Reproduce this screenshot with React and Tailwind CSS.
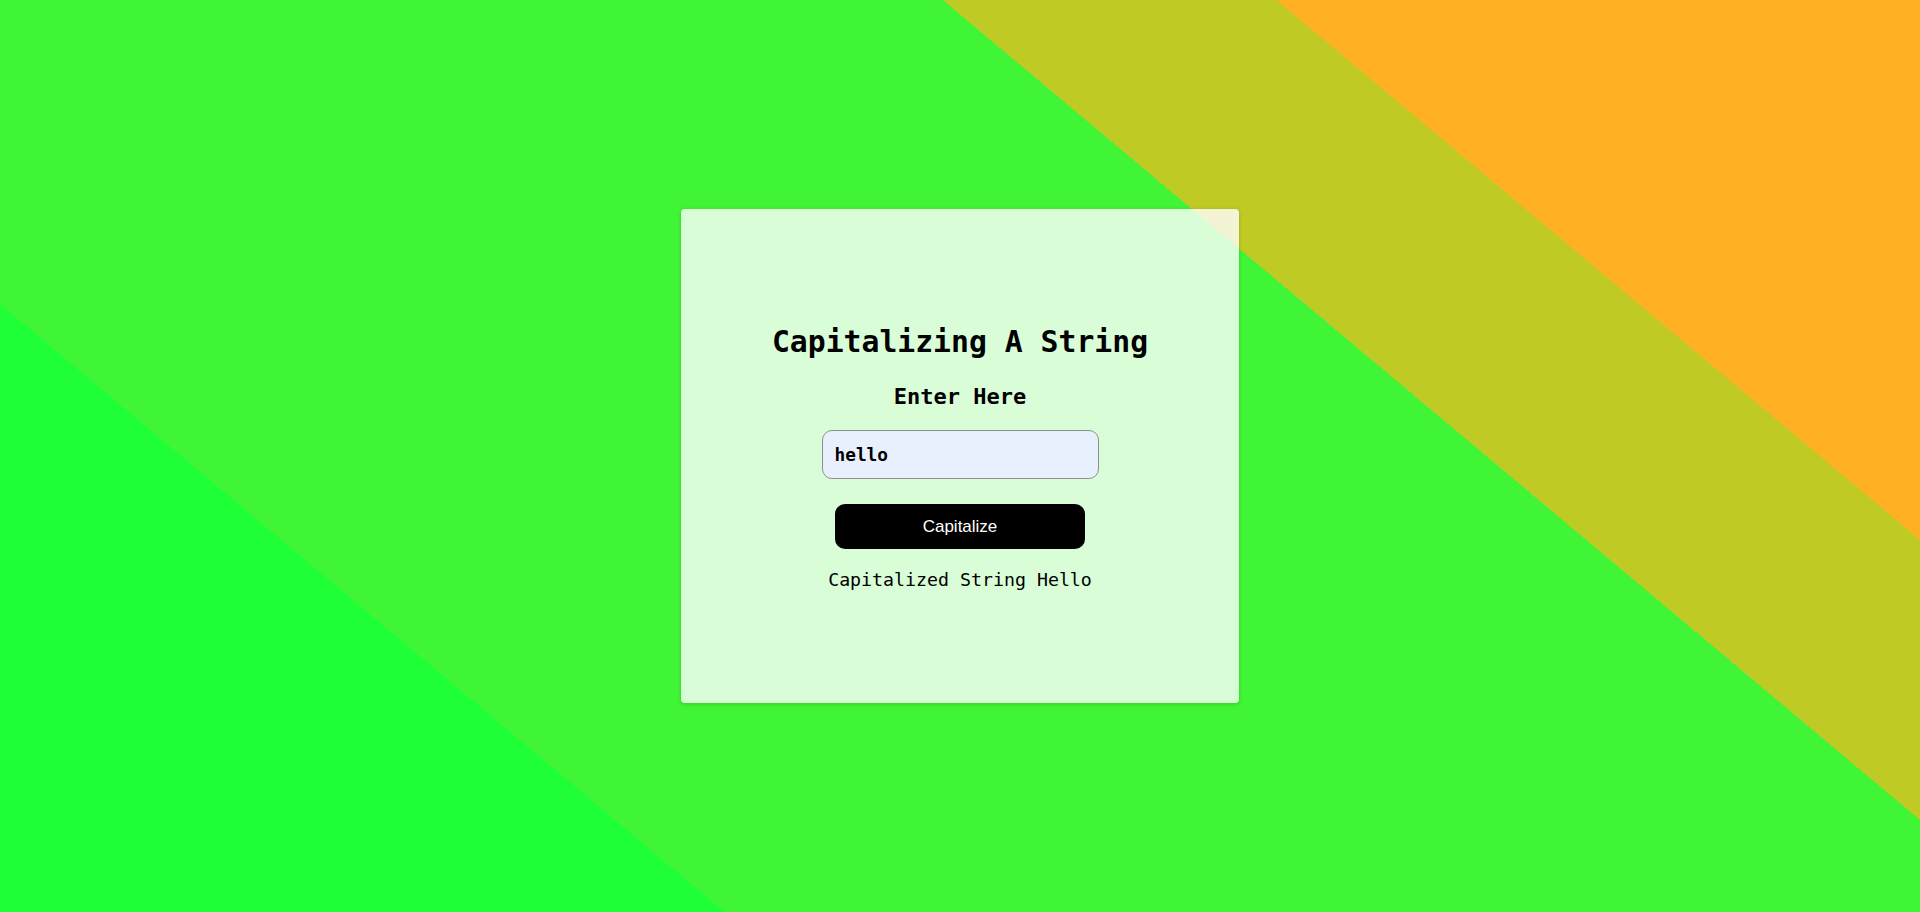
import React, { useState } from "react";

// Capitalize the first letter of the string
const capitalize = (s) => (s ? s.charAt(0).toUpperCase() + s.slice(1) : "");

export default function App() {
  const [text, setText] = useState("hello");
  const [result, setResult] = useState("Hello");

  return (
    <div className="h-screen w-full flex items-center justify-center bg-[linear-gradient(40deg,#1eff38_24.1%,#3ff535_24.1%,#3ff535_67.5%,#bfca25_67.5%,#bfca25_78.6%,#ffb123_78.6%)]">
      {/* Card */}
      <div className="w-[558px] h-[494px] bg-white/80 rounded-[4px] shadow-[0_1px_4px_rgba(0,0,0,0.18)] flex flex-col items-center pt-[116px] font-['DejaVu_Sans_Mono',monospace] text-black">
        <h1 className="text-[29.75px] leading-[34px] font-bold">Capitalizing A String</h1>
        <h2 className="mt-[25px] text-[22px] leading-[26px] font-bold">Enter Here</h2>

        <input
          type="text"
          value={text}
          onChange={(e) => setText(e.target.value)}
          className="mt-[20px] w-[277px] h-[49px] px-[12px] bg-[#e8f0fe] border border-[#8f8f8f] rounded-[10px] text-[17.8px] font-bold outline-none"
        />

        <button
          onClick={() => setResult(capitalize(text))}
          className="mt-[25px] w-[250px] h-[45px] bg-black text-white rounded-[10px] font-['Liberation_Sans',Arial,sans-serif] text-[17px]"
        >
          Capitalize
        </button>

        <p className="mt-[20px] text-[18.25px] leading-[22px]">Capitalized String {result}</p>
      </div>
    </div>
  );
}
